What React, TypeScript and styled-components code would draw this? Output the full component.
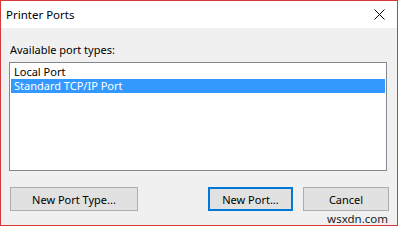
import React from 'react';
import styled, { createGlobalStyle } from 'styled-components';

const Global = createGlobalStyle`
  html, body {
    margin: 0;
    padding: 0;
    background: #ffffff;
  }
  body {
    font-family: "Segoe UI", "Noto Sans", "Liberation Sans", sans-serif;
    font-size: 11px;
    color: #000;
  }
`;

const Window = styled.div`
  width: 398px;
  height: 226px;
  box-sizing: border-box;
  border: 1px solid #d6393a;
  background: #f0f0f0;
  display: flex;
  flex-direction: column;
`;

const TitleBar = styled.div`
  height: 28px;
  background: #ffffff;
  display: flex;
  align-items: center;
  justify-content: space-between;
  padding: 0 8px 0 5px;
`;

const Title = styled.span`
  font-size: 11.5px;
  margin-top: -1px;
`;

const CloseButton = styled.button`
  border: none;
  background: transparent;
  padding: 0;
  width: 12px;
  height: 12px;
  display: flex;
  align-items: center;
  justify-content: center;
  margin-right: 4px;
`;

const Body = styled.div`
  flex: 1;
  padding: 14px 10px 0 8px;
  display: flex;
  flex-direction: column;
`;

const Label = styled.div`
  padding-left: 1px;
  line-height: 16px;
  margin-bottom: 4px;
`;

const ListBox = styled.div`
  width: 378px;
  height: 109px;
  box-sizing: border-box;
  border: 1px solid #828790;
  background: #ffffff;
  padding: 2px 1px;
`;

const Item = styled.div<{ $selected?: boolean }>`
  height: 14px;
  line-height: 14px;
  padding-left: 3px;
  background: ${(p) => (p.$selected ? '#3399ff' : 'transparent')};
  color: ${(p) => (p.$selected ? '#ffffff' : '#000000')};
`;

const ButtonRow = styled.div`
  display: flex;
  justify-content: space-between;
  margin-top: 16px;
  padding-left: 1px;
  width: 379px;
`;

const Group = styled.div`
  display: flex;
  gap: 10px;
`;

const Button = styled.button<{ $width: number; $default?: boolean }>`
  width: ${(p) => p.$width}px;
  height: 24px;
  box-sizing: border-box;
  background: #e1e1e1;
  border: ${(p) => (p.$default ? '2px solid #0078d7' : '1px solid #adadad')};
  font-family: inherit;
  font-size: 11px;
  color: #000;
  padding: 0;
`;

const Watermark = styled.div`
  align-self: flex-end;
  margin-right: -1px;
  margin-top: 2px;
  font-size: 11.5px;
  line-height: 12px;
  color: #1a1a1a;
`;

export default function App() {
  return (
    <>
      <Global />
      <Window>
        <TitleBar>
          <Title>Printer Ports</Title>
          <CloseButton aria-label="Close">
            <svg width="11" height="11" viewBox="0 0 11 11">
              <path d="M0.5 0.5 L10.5 10.5 M10.5 0.5 L0.5 10.5" stroke="#000" strokeWidth="1" />
            </svg>
          </CloseButton>
        </TitleBar>
        <Body>
          <Label>Available port types:</Label>
          <ListBox>
            <Item>Local Port</Item>
            <Item $selected>Standard TCP/IP Port</Item>
          </ListBox>
          <ButtonRow>
            <Button $width={128}>New Port Type...</Button>
            <Group>
              <Button $width={85} $default>New Port...</Button>
              <Button $width={86}>Cancel</Button>
            </Group>
          </ButtonRow>
          <Watermark>wsxdn.com</Watermark>
        </Body>
      </Window>
    </>
  );
}
